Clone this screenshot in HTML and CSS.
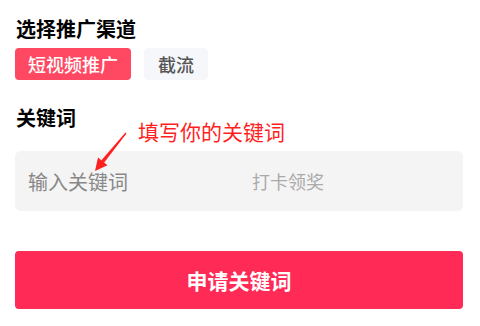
FILE: index.html
```html
<!DOCTYPE html>
<html lang="zh-CN">
<head>
  <meta charset="UTF-8">
  <meta name="viewport" content="width=device-width, initial-scale=1.0">
  <title>申请关键词</title>
  <link rel="stylesheet" href="styles.css">
</head>
<body>
  <div class="container">
    <h2 class="title">选择推广渠道</h2>
    <div class="tags">
      <span class="tag active">短视频推广</span>
      <span class="tag">截流</span>
    </div>

    <div class="keyword-section">
      <h2 class="title">关键词</h2>
      <div class="tip">填写你的关键词</div>
      <svg class="arrow" width="40" height="46" viewBox="0 0 40 46">
        <path d="M34.5 5.4 L33.5 4.6 L9.2 32.5 L12 34.8 Z" fill="#ff2020"/>
        <path d="M3 43 L6 29.5 L15.5 37.3 Z" fill="#ff2020"/>
      </svg>
      <div class="input-box">
        <input type="text" placeholder="输入关键词">
        <span class="hint">打卡领奖</span>
      </div>
    </div>

    <button class="submit">申请关键词</button>
  </div>
</body>
</html>
```

FILE: styles.css
```css
body {
  margin: 0;
  font-family: "Noto Sans CJK SC", "Noto Sans", sans-serif;
  background: #fff;
  color: #000;
}
.container {
  padding: 14px 17px 0 15px;
}
.title {
  margin: 0;
  font-size: 20px;
  font-weight: bold;
  line-height: 29px;
  padding-left: 1px;
}
.tags {
  display: flex;
  gap: 13px;
  margin-top: 5px;
}
.tag {
  height: 32px;
  line-height: 32px;
  padding: 0 14px;
  font-size: 18px;
  font-weight: 500;
  background-color: #f6f7fb;
  color: #555;
  border-radius: 4px;
}
.tag.active {
  padding: 0 13px;
  background-color: #ff4862;
  color: #fff;
}
.keyword-section {
  position: relative;
  margin-top: 23px;
}
.tip {
  position: absolute;
  left: 123px;
  top: 14px;
  font-size: 21px;
  line-height: 28px;
  color: #ff1f1f;
}
.arrow {
  position: absolute;
  left: 77px;
  top: 25px;
}
.input-box {
  display: flex;
  align-items: center;
  height: 60px;
  margin-top: 19px;
  padding: 0 13px;
  background-color: #f4f4f4;
  border-radius: 6px;
}
.input-box input {
  flex: 1;
  min-width: 0;
  border: none;
  background: none;
  outline: none;
  font-family: inherit;
  font-size: 20px;
  color: #333;
  padding: 0;
}
.input-box input::placeholder {
  color: #888;
}
.hint {
  font-size: 18px;
  color: #aaa;
  margin-right: 126px;
}
.submit {
  display: block;
  width: 100%;
  height: 58px;
  margin-top: 40px;
  border: none;
  border-radius: 4px;
  background-color: #ff2a55;
  color: #fff;
  font-family: inherit;
  font-size: 21px;
  font-weight: bold;
}
```
